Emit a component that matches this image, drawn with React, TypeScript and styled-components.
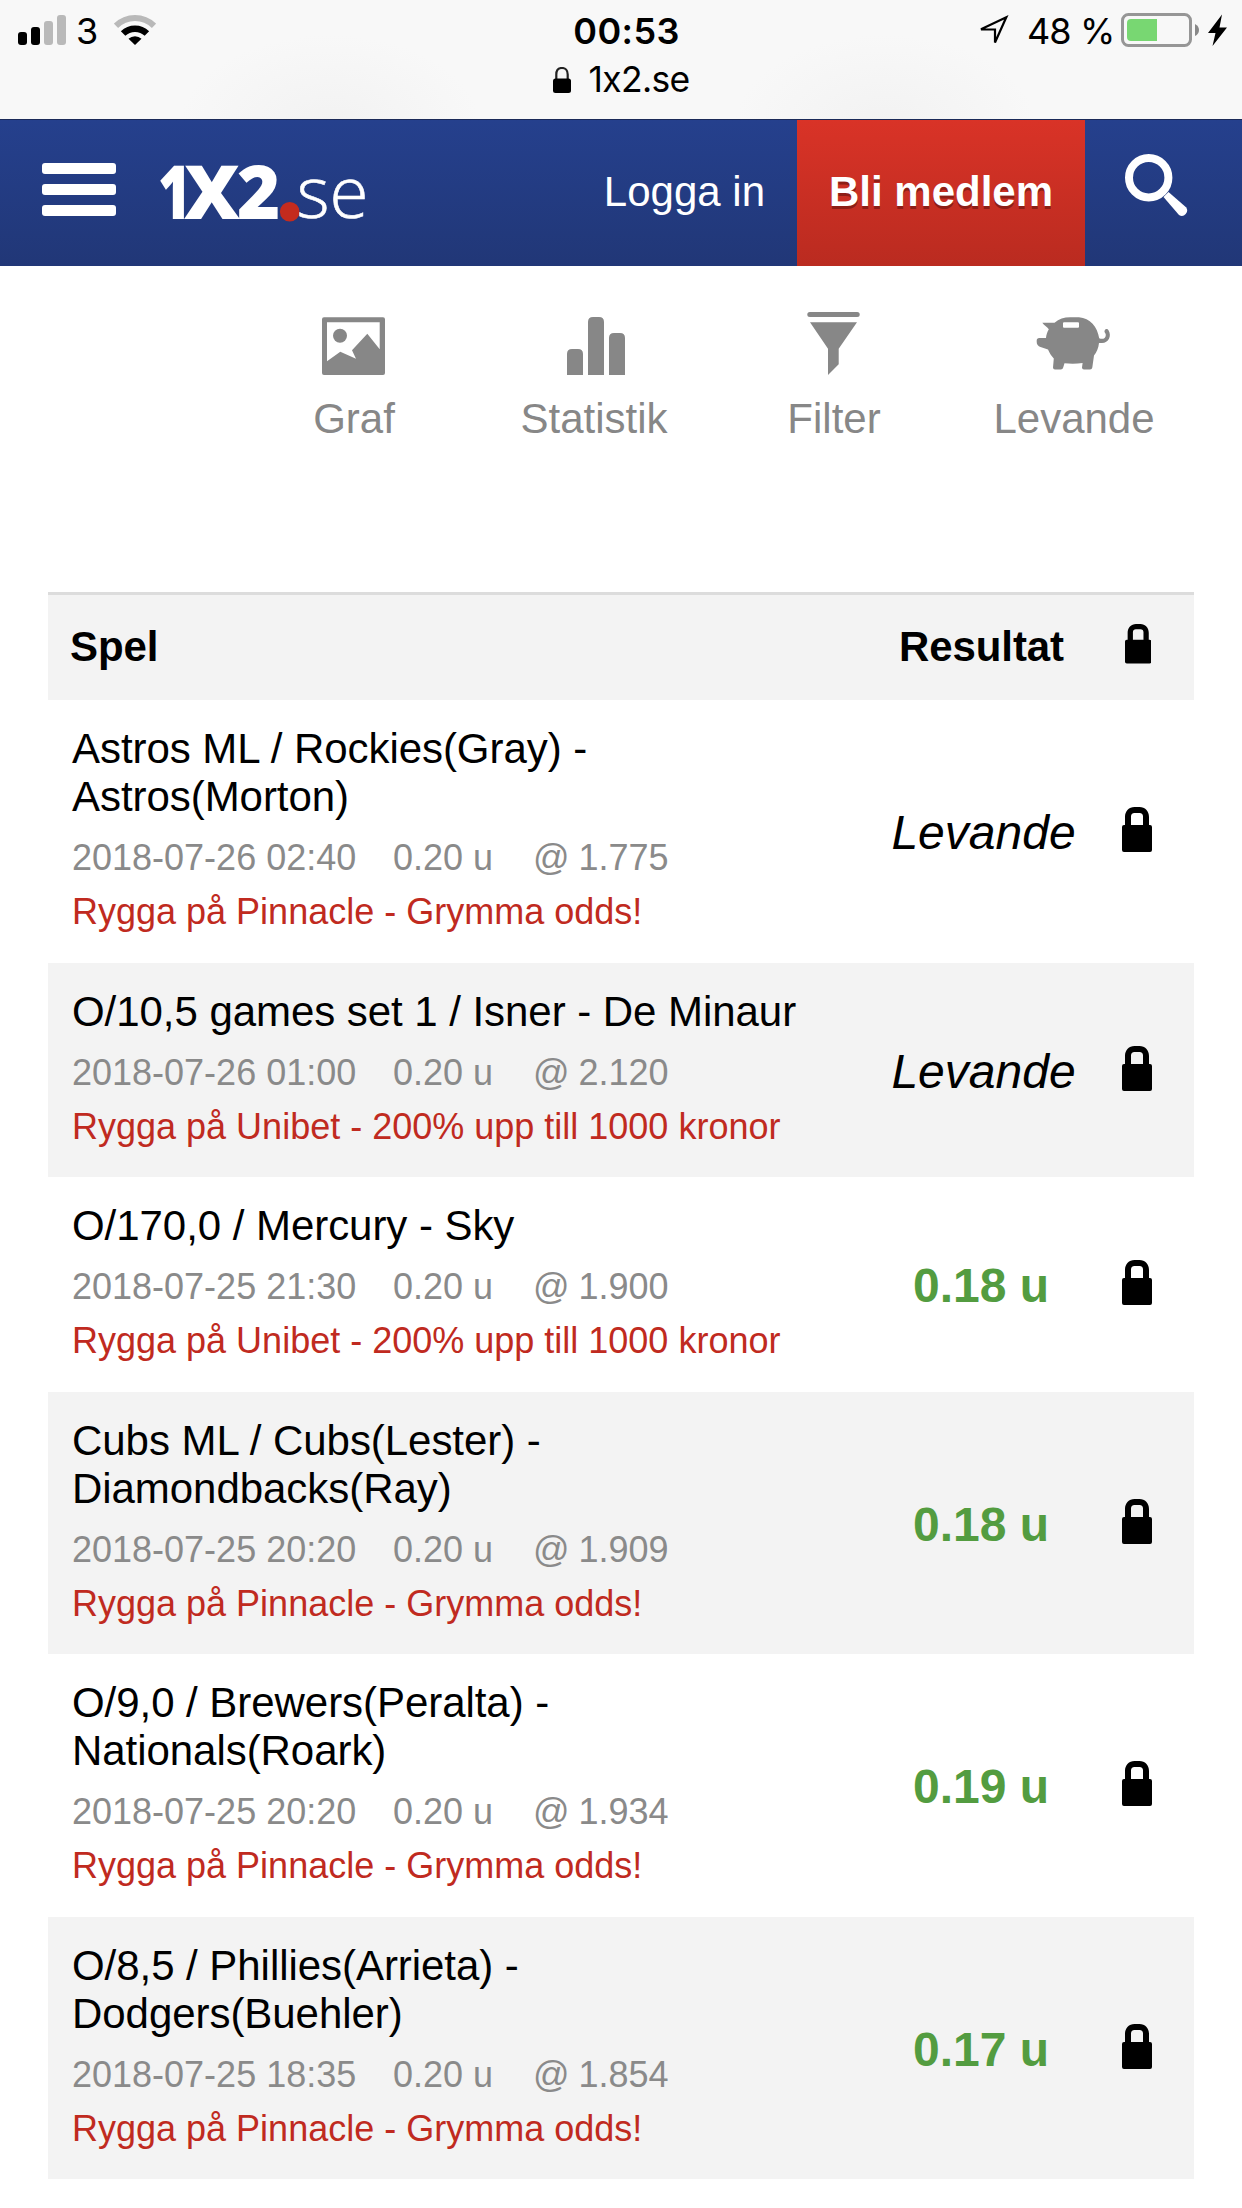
import React from "react";
import styled, { createGlobalStyle } from "styled-components";

const GlobalStyle = createGlobalStyle`
  html, body { margin: 0; padding: 0; background: #fff; }
  * { box-sizing: border-box; }
  body { font-family: "Liberation Sans", Arial, sans-serif; color: #000; }
  svg { display: block; flex: none; }
`;

const Page = styled.div`
  width: 1242px;
  height: 2208px;
  overflow: hidden;
  background: #fff;
`;

/* Status bar */

const StatusBar = styled.header`
  height: 119px;
  background: radial-gradient(ellipse 150px 90px at 330px 125px, #f2f2f2, rgba(248, 248, 248, 0)),
    radial-gradient(ellipse 150px 90px at 885px 125px, #f2f2f2, rgba(248, 248, 248, 0)), #f8f8f8;
  font-family: Inter, "Liberation Sans", sans-serif;
  font-size: 36px;
  line-height: 44px;
`;

const StatusRow = styled.div`
  display: grid;
  grid-template-columns: 1fr auto 1fr;
  height: 60px;
  padding-top: 9px;
`;

const StatusLeft = styled.div`
  display: flex;
  padding-left: 18px;
`;

const StatusRight = styled.div`
  display: flex;
  justify-content: flex-end;
  padding-right: 15px;
`;

const Carrier = styled.span`
  width: 46px;
  padding-left: 8px;
`;

const Clock = styled.time`
  font-weight: 600;
  letter-spacing: 0.4px;
  padding-left: 11px;
`;

const Percent = styled.span`
  width: 98px;
  padding-left: 4px;
  white-space: nowrap;
  letter-spacing: -0.9px;
`;

const ArrowSlot = styled.span`
  width: 48px;
`;

const Address = styled.div`
  display: flex;
  justify-content: center;
  gap: 18px;
  height: 44px;
  margin-top: -2px;
  font-size: 35.5px;
  letter-spacing: -0.7px;
`;

const AddressLock = styled.span`
  padding-top: 9px;
`;

/* Navigation */

const NavBar = styled.nav`
  display: flex;
  height: 147px;
  border-top: 1px solid #1b2a58;
  background: linear-gradient(#25408d, #213777);
  color: #fff;
  font-size: 42px;
`;

const MenuButton = styled.button`
  display: flex;
  flex-direction: column;
  gap: 10px;
  width: 155px;
  padding: 43px 0 0 42px;
  border: 0;
  background: none;
`;

const MenuLine = styled.span`
  width: 74px;
  height: 11px;
  border-radius: 3px;
  background: #fff;
`;

const Logo = styled.a`
  flex: 1;
`;

const LoginLink = styled.a`
  padding: 48px 32px 0 0;
  line-height: 48px;
`;

const JoinLink = styled.a`
  width: 288px;
  padding-top: 48px;
  line-height: 48px;
  text-align: center;
  font-weight: bold;
  text-shadow: 0 3px 0 #7d1a13cc;
  background: linear-gradient(#d93327, #ba2b20);
`;

const SearchButton = styled.button`
  display: flex;
  align-items: flex-start;
  width: 157px;
  padding: 34px 0 0 40px;
  border: 0;
  background: none;
`;

/* Tool tabs */

const Tools = styled.div`
  display: grid;
  grid-template-columns: repeat(4, 240px);
  justify-content: end;
  height: 326px;
  padding: 46px 48px 0 0;
  color: #878787;
`;

const Tool = styled.a`
  display: flex;
  flex-direction: column;
  align-items: center;
  gap: 19px;
  font-size: 42px;
  line-height: 48px;
`;

/* Bet table */

const columns = "836px 194px 116px";

const Table = styled.main`
  width: 1146px;
  margin-left: 48px;
`;

const TableHead = styled.div`
  display: grid;
  grid-template-columns: ${columns};
  align-items: center;
  height: 108px;
  border-top: 3px solid #dcdcdc;
  background: #f3f3f3;
  font-size: 42px;
  font-weight: bold;
  line-height: 48px;
`;

const HeadLabel = styled.span<{ $center?: boolean }>`
  padding: ${(p) => (p.$center ? "0 0 1px 1px" : "0 0 1px 22px")};
  text-align: ${(p) => (p.$center ? "center" : "left")};
  letter-spacing: -0.1px;
`;

const LockCell = styled.span<{ $indent: number; $lift: number }>`
  padding: 0 0 ${(p) => p.$lift}px ${(p) => p.$indent}px;
`;

const Row = styled.article<{ $height: number; $shaded: boolean }>`
  display: grid;
  grid-template-columns: ${columns};
  align-items: center;
  height: ${(p) => p.$height}px;
  background: ${(p) => (p.$shaded ? "#f3f3f3" : "#fff")};
`;

const Bet = styled.div`
  align-self: start;
  padding: 25px 60px 0 24px;
`;

const BetTitle = styled.div`
  font-size: 42px;
  line-height: 48px;
  letter-spacing: -0.05px;
  white-space: pre-line;
`;

const BetMeta = styled.div`
  display: flex;
  margin-top: 10px;
  color: #8a8a8a;
  font-size: 36px;
  line-height: 54px;
`;

const MetaItem = styled.span<{ $width?: number }>`
  width: ${(p) => (p.$width ? `${p.$width}px` : "auto")};
  word-spacing: ${(p) => (p.$width ? 0 : "-1px")};
`;

const Promo = styled.a`
  display: block;
  color: #c02a20;
  font-size: 36px;
  line-height: 54px;
`;

const Result = styled.div<{ $live: boolean }>`
  font-size: 48px;
  line-height: 54px;
  text-align: center;
  padding: 3px 0 0 ${(p) => (p.$live ? "5px" : "0")};
  font-style: ${(p) => (p.$live ? "italic" : "normal")};
  font-weight: ${(p) => (p.$live ? "normal" : "bold")};
  color: ${(p) => (p.$live ? "#000" : "#539c40")};
`;

const Lock = ({ width }: { width: number }) => (
  <svg width={width} height={width * 1.5} viewBox="0 0 30 45">
    <path
      fillRule="evenodd"
      d="M3 18V10C3 4 7 0 12.500 0H17.500C23 0 27 4 27 10V18H28Q30 18 30 20V43Q30 45 28 45H2Q0 45 0 43V20Q0 18 2 18ZM9 18H21V9.500Q21 6 17.500 6H12.500Q9 6 9 9.500Z"
    />
  </svg>
);

const SmallLock = () => (
  <svg width="18" height="26" viewBox="0 0 18 26">
    <path d="M3.300 13V7.500C3.300 3.500 5.500 1 9 1S14.700 3.500 14.700 7.500V13" fill="none" stroke="#222" strokeWidth="2.200" />
    <rect y="11.500" width="18" height="14.500" rx="2.500" />
  </svg>
);

const Signal = () => (
  <svg width="50" height="40" viewBox="0 0 50 40">
    <rect x="0" y="23" width="9" height="13" rx="3" />
    <rect x="13" y="18" width="9" height="18" rx="3" />
    <rect x="26" y="12" width="9" height="24" rx="3" fill="#b9b9b9" />
    <rect x="39" y="6" width="9" height="30" rx="3" fill="#b9b9b9" />
  </svg>
);

const Wifi = () => (
  <svg width="42" height="40" viewBox="0 0 42 40">
    <path d="M2 16.800A27 27 0 0 1 40 16.800" fill="none" stroke="#b9b9b9" strokeWidth="6" />
    <path d="M9.100 24.500A17 16.500 0 0 1 32.900 24.500" fill="none" stroke="#000" strokeWidth="6.500" />
    <path d="M21 36L14.500 29.800A9.300 9.300 0 0 1 27.500 29.800Z" />
  </svg>
);

const Arrow = () => (
  <svg width="34" height="40" viewBox="0 0 34 40">
    <path d="M6 20.300L31.300 8.300L20 33.500V20.500Z" fill="none" stroke="#000" strokeWidth="2.200" />
  </svg>
);

const Battery = () => (
  <svg width="87" height="40" viewBox="0 0 87 40">
    <rect x="1.500" y="5.500" width="68" height="31" rx="6" fill="none" stroke="#969696" strokeWidth="3" />
    <path d="M36 10V32H10Q6 32 6 28V14Q6 10 10 10Z" fill="#78d772" />
    <path d="M74 15Q78 17 78 21T74 27Z" fill="#888" />
  </svg>
);

const Bolt = () => (
  <svg width="19" height="40" viewBox="0 0 19 40">
    <path d="M14 5.500L0 24H7.500L4.500 37L19 18.500H11.500Z" />
  </svg>
);

const LogoMark = () => (
  <svg width="220" height="145" viewBox="155 120 220 145" fill="#fff" fontFamily='"Open Sans", sans-serif'>
    <text y="218.500" fontSize="74" fontWeight="800">
      <tspan x="158" textLength="33" lengthAdjust="spacingAndGlyphs">1</tspan>
      <tspan x="184" textLength="56" lengthAdjust="spacingAndGlyphs">X</tspan>
      <tspan x="237">2</tspan>
    </text>
    <circle cx="289.700" cy="211.700" r="9.800" fill="#c42b1e" />
    <text x="296.500" y="218" fontSize="72" fontWeight="300" textLength="72" lengthAdjust="spacingAndGlyphs" stroke="#fff" strokeWidth="0.600">
      se
    </text>
  </svg>
);

const SearchIcon = () => (
  <svg width="64" height="64" viewBox="0 0 64 64" fill="#fff">
    <circle cx="23.700" cy="23.700" r="19.700" fill="none" stroke="#fff" strokeWidth="8" />
    <path d="M38.500 43L43.500 38L61 53.300A5.300 5.300 0 0 1 54 61Z" />
  </svg>
);

const ToolIcon = ({ children }: { children: React.ReactNode }) => (
  <svg width="80" height="64" viewBox="0 0 80 64" fill="#878787">
    {children}
  </svg>
);

const tools = [
  {
    label: "Graf",
    icon: (
      <>
        <path
          fillRule="evenodd"
          d="M10 5.300H69Q71 5.300 71 7.300V61Q71 63 69 63H10Q8 63 8 61V7.300Q8 5.300 10 5.300ZM13 10.300V49.300L26.300 39.700L42 46.700L38 38.300L53.300 21.700L65.700 37.300V10.300Z"
        />
        <circle cx="26" cy="23.700" r="7" />
      </>
    ),
  },
  {
    label: "Statistik",
    icon: (
      <path d="M13 63V42Q13 37 18 37H24Q29 37 29 42V63ZM34 63V10Q34 5 39 5H45Q50 5 50 10V63ZM55 63V26Q55 21 60 21H66Q71 21 71 26V63Z" />
    ),
  },
  {
    label: "Filter",
    icon: (
      <>
        <rect x="13.300" y="0" width="52.400" height="5" rx="2.500" />
        <path d="M16 10.300H63L44.700 36.700V52.300L34 63V36.700Z" />
      </>
    ),
  },
  {
    label: "Levande",
    icon: (
      <>
        <path
          fillRule="evenodd"
          d="M8.300 10.700H20.500C25 7 30 5.300 36 5.300H45C56 6 63.500 15 65.200 26.300C68 27.500 71.800 27 71.800 23C71.800 20.500 69.500 20.500 71 17.800C72 16.600 73.700 17 74.500 18.300C78 24 74.500 31 68 31H65C64.500 36 62.500 40.500 60 43.500L58.300 55.500Q58 57.500 56 57.500H50Q48 57.500 48 55.500L48.600 51C43 52 36 52 30.500 51.300L29.200 55.500Q28.800 57.500 26.800 57.500H21Q19 57.500 19 55.500L19.800 46.500C17.500 44 15.500 41 14 37.500L6.500 35C4 34 2.700 32.500 2.700 30V28.500Q2.700 26 5.300 26H12C12.200 23 13.300 20 14.800 17.300C13 14.500 10 13.500 8.300 10.700ZM30 10.300Q29 10.300 29 11.300V14.700Q29 15.700 30 15.700H44Q45 15.700 45 14.700V11.300Q45 10.300 44 10.300Z"
        />
      </>
    ),
  },
];

const pinnacle = "Rygga på Pinnacle - Grymma odds!";
const unibet = "Rygga på Unibet - 200% upp till 1000 kronor";

const bets = [
  { title: "Astros ML / Rockies(Gray) -\nAstros(Morton)", date: "2018-07-26 02:40", odds: "1.775", promo: pinnacle, result: "Levande", height: 263 },
  { title: "O/10,5 games set 1 / Isner - De Minaur", date: "2018-07-26 01:00", odds: "2.120", promo: unibet, result: "Levande", height: 214 },
  { title: "O/170,0 / Mercury - Sky", date: "2018-07-25 21:30", odds: "1.900", promo: unibet, result: "0.18 u", height: 215 },
  { title: "Cubs ML / Cubs(Lester) -\nDiamondbacks(Ray)", date: "2018-07-25 20:20", odds: "1.909", promo: pinnacle, result: "0.18 u", height: 262 },
  { title: "O/9,0 / Brewers(Peralta) -\nNationals(Roark)", date: "2018-07-25 20:20", odds: "1.934", promo: pinnacle, result: "0.19 u", height: 263 },
  { title: "O/8,5 / Phillies(Arrieta) -\nDodgers(Buehler)", date: "2018-07-25 18:35", odds: "1.854", promo: pinnacle, result: "0.17 u", height: 262 },
];

export default function App() {
  return (
    <Page>
      <GlobalStyle />
      <StatusBar>
        <StatusRow>
          <StatusLeft>
            <Signal />
            <Carrier>3</Carrier>
            <Wifi />
          </StatusLeft>
          <Clock>00:53</Clock>
          <StatusRight>
            <ArrowSlot>
              <Arrow />
            </ArrowSlot>
            <Percent>48 %</Percent>
            <Battery />
            <Bolt />
          </StatusRight>
        </StatusRow>
        <Address>
          <AddressLock>
            <SmallLock />
          </AddressLock>
          1x2.se
        </Address>
      </StatusBar>

      <NavBar>
        <MenuButton aria-label="Meny">
          <MenuLine />
          <MenuLine />
          <MenuLine />
        </MenuButton>
        <Logo>
          <LogoMark />
        </Logo>
        <LoginLink>Logga in</LoginLink>
        <JoinLink>Bli medlem</JoinLink>
        <SearchButton aria-label="Sök">
          <SearchIcon />
        </SearchButton>
      </NavBar>

      <Tools>
        {tools.map((tool) => (
          <Tool key={tool.label}>
            <ToolIcon>{tool.icon}</ToolIcon>
            {tool.label}
          </Tool>
        ))}
      </Tools>

      <Table>
        <TableHead>
          <HeadLabel>Spel</HeadLabel>
          <HeadLabel $center>Resultat</HeadLabel>
          <LockCell $indent={47} $lift={7}>
            <Lock width={26.4} />
          </LockCell>
        </TableHead>
        {bets.map((bet, i) => (
          <Row key={bet.title} $height={bet.height} $shaded={i % 2 === 1}>
            <Bet>
              <BetTitle>{bet.title}</BetTitle>
              <BetMeta>
                <MetaItem $width={321}>{bet.date}</MetaItem>
                <MetaItem $width={140}>0.20 u</MetaItem>
                <MetaItem>@ {bet.odds}</MetaItem>
              </BetMeta>
              <Promo>{bet.promo}</Promo>
            </Bet>
            <Result $live={bet.result === "Levande"}>{bet.result}</Result>
            <LockCell $indent={44} $lift={4}>
              <Lock width={30} />
            </LockCell>
          </Row>
        ))}
      </Table>
    </Page>
  );
}
